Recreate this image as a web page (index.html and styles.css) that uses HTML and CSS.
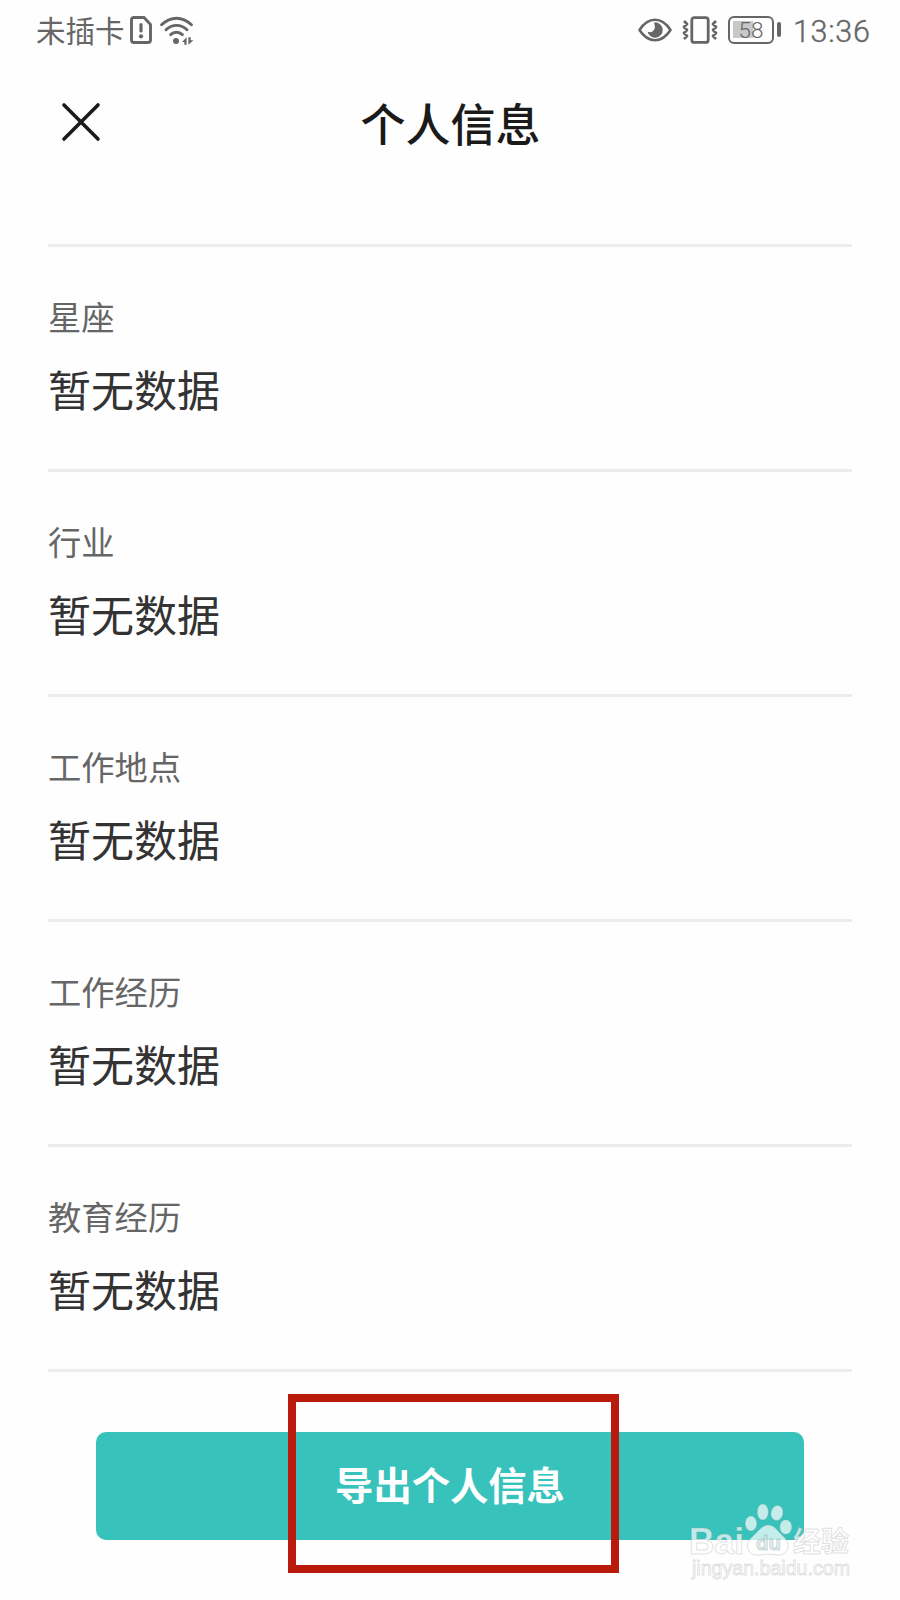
FILE: index.html
```
<!DOCTYPE html>
<html lang="zh-CN">
  <head>
    <title>个人信息</title>
    <meta charset="utf-8" />
    <meta name="viewport" content="width=device-width, initial-scale=1.0" />

    <link rel="stylesheet" href="styles.css">
  </head>
  <body>
    <div class="status-bar">
      <span class="carrier">未插卡</span>
      <svg class="sim" width="22" height="28" viewBox="0 0 22 28">
        <path d="M4 1.5H14L20.5 8.5V24Q20.5 26.5 18 26.5H4Q1.5 26.5 1.5 24V4Q1.5 1.5 4 1.5Z" fill="none" stroke="#666" stroke-width="2.9" />
        <path d="M11 8.5V15" stroke="#666" stroke-width="3.2" stroke-linecap="round" />
        <circle cx="11" cy="20.3" r="2.1" fill="#666" />
      </svg>
      <svg class="wifi" width="34" height="29" viewBox="0 0 34 29">
        <g fill="none" stroke="#666" stroke-width="2.9" stroke-linecap="round">
          <path d="M1.6 8.8Q8.5 2.2 16.5 2.2T31.4 8.8" />
          <path d="M6 13.8Q10.5 9.4 16.5 9.4T27 13.8" />
          <path d="M10.6 18.6Q13 16.3 16.5 16.3T22.4 18.6" />
        </g>
        <circle cx="16" cy="25" r="3" fill="#666" />
        <path d="M22 26L26.6 21.3V28.7H24.3V26ZM33.4 24.2L28.4 28.7V21.3H30.7V24.2Z" fill="#666" />
      </svg>
      <div class="status-right">
        <svg class="eye" width="34" height="24" viewBox="0 0 34 24">
          <path d="M1.5 12Q8 1.8 17 1.8T32.5 12Q26 22.2 17 22.2T1.5 12Z" fill="none" stroke="#666" stroke-width="2.6" stroke-linejoin="round" />
          <path d="M17.5 4.3A7.7 7.7 0 1 1 9.5 13.5Q12 15 14.8 13.2Q18.3 10.5 16 4.8Z" fill="#666" />
        </svg>
        <svg class="vibrate" width="36" height="28" viewBox="0 0 36 28">
          <g fill="none" stroke="#666">
            <rect x="9.8" y="1.6" width="16.4" height="24.8" rx="2.5" stroke-width="2.8" />
            <path d="M2 5L5 8L2 11L5 14L2 17L5 20L2 23M34 5L31 8L34 11L31 14L34 17L31 20L34 23" stroke-width="2.8" stroke-linejoin="round" />
          </g>
        </svg>
        <div class="battery"><span>58</span></div>
        <span class="time">13:36</span>
      </div>
    </div>

    <header>
      <svg class="close" width="40" height="40" viewBox="0 0 40 40">
        <path d="M3 3L37 37M37 3L3 37" stroke="#1a1a1a" stroke-width="3.6" stroke-linecap="round" />
      </svg>
      <h1>个人信息</h1>
    </header>

    <main>
      <section>
        <h2>星座</h2>
        <p>暂无数据</p>
      </section>
      <section>
        <h2>行业</h2>
        <p>暂无数据</p>
      </section>
      <section>
        <h2>工作地点</h2>
        <p>暂无数据</p>
      </section>
      <section>
        <h2>工作经历</h2>
        <p>暂无数据</p>
      </section>
      <section>
        <h2>教育经历</h2>
        <p>暂无数据</p>
      </section>
    </main>

    <button type="button">导出个人信息</button>

    <div class="highlight"></div>

    <div class="watermark">
      <svg width="168" height="90" viewBox="0 0 168 90">
        <g class="mark">
          <ellipse cx="64" cy="27.5" rx="5.8" ry="7.6" />
          <ellipse cx="75.8" cy="16" rx="5.6" ry="8" />
          <ellipse cx="90" cy="17" rx="6" ry="7.6" transform="rotate(12 90 17)" />
          <ellipse cx="98.8" cy="31" rx="6" ry="7.3" />
          <path d="M81 29Q87 29 91 35L98 42Q102 47 101 52Q98 60 90 59Q81 57 73 59Q63 60 61 53Q59 47 64 42L71 35Q76 29 81 29Z" />
          <text class="baidu" x="2" y="58" textLength="55" lengthAdjust="spacingAndGlyphs">Bai</text>
          <text class="cn" x="106" y="56" textLength="56" lengthAdjust="spacingAndGlyphs">经验</text>
          <text class="site" x="5" y="79" textLength="158" lengthAdjust="spacingAndGlyphs">jingyan.baidu.com</text>
        </g>
        <text class="du" x="69" y="54" textLength="25" lengthAdjust="spacingAndGlyphs">du</text>
      </svg>
    </div>
  </body>
</html>
```
FILE: styles.css
```
body {
  position: relative;
  height: 1600px;
  margin: 0;
  overflow: hidden;
  background-color: #fefefe;
  font-family: 'Noto Sans CJK SC', sans-serif;
}

.status-bar {
  display: flex;
  align-items: center;
  height: 60px;
  padding: 0 31px 0 36px;
  color: #666;
}

.carrier {
  width: 90px;
  padding-bottom: 2px;
  font-size: 29.5px;
  line-height: 58px;
}

.sim {
  margin-left: 4px;
}

.wifi {
  margin-left: 8px;
}

.status-right {
  display: flex;
  align-items: center;
  margin-left: auto;
}

.vibrate {
  margin-left: 10px;
}

.battery {
  position: relative;
  box-sizing: border-box;
  width: 46px;
  height: 28px;
  margin-left: 10px;
  border: 2.5px solid #666;
  border-radius: 6px;
  background: linear-gradient(#c8c8c8, #c8c8c8) 3px 3px / 20px 17px no-repeat;
  font-family: Roboto, sans-serif;
  font-size: 22.5px;
  font-weight: 300;
  line-height: 25px;
  text-align: center;
}

.battery::after {
  content: '';
  position: absolute;
  top: 4px;
  right: -9px;
  width: 4px;
  height: 15px;
  border-radius: 2px;
  background-color: #666;
}

.time {
  width: 76px;
  margin-left: 19px;
  padding-top: 4px;
  font-family: Roboto, sans-serif;
  font-size: 30.5px;
  font-weight: 300;
  letter-spacing: 0.7px;
  line-height: 56px;
  white-space: nowrap;
  -webkit-text-stroke: 0.4px #666;
}

header {
  position: relative;
  display: flex;
  align-items: center;
  justify-content: center;
  height: 126px;
  margin-bottom: 58px;
}

.close {
  position: absolute;
  left: 61px;
  top: 42px;
}

h1 {
  margin: 0 0 0 1px;
  color: #1a1a1a;
  font-size: 45px;
  font-weight: 500;
  line-height: 60px;
}

main {
  margin: 0 48px;
  border-top: 3px solid #ececec;
}

section {
  box-sizing: border-box;
  height: 225px;
  padding-top: 45px;
  border-bottom: 3px solid #ececec;
}

h2 {
  margin: 0;
  color: #666;
  font-size: 33.3px;
  font-weight: 400;
  line-height: 48px;
}

p {
  margin: 16px 0 0;
  color: #333;
  font-size: 43px;
  line-height: 64px;
}

button {
  display: block;
  width: 708px;
  height: 108px;
  margin: 60px auto 0;
  padding: 0 0 6px;
  border: 0;
  border-radius: 10px;
  background-color: #38c2bc;
  color: #fff;
  font-family: inherit;
  font-size: 38.3px;
  font-weight: 700;
}

.highlight {
  position: absolute;
  left: 288px;
  top: 1394px;
  box-sizing: border-box;
  width: 331px;
  height: 179px;
  border: 8px solid #b91a0b;
}

.watermark {
  position: absolute;
  left: 687px;
  top: 1496px;
}

.watermark svg {
  display: block;
  overflow: visible;
}

.mark {
  fill: rgba(255, 255, 255, 0.7);
  stroke: rgba(150, 150, 150, 0.3);
  stroke-width: 1px;
}

.baidu,
.du {
  font-family: 'Liberation Sans', sans-serif;
  font-weight: 700;
}

.baidu {
  font-size: 37px;
}

.cn {
  font-size: 28px;
  font-weight: 700;
}

.site {
  font-family: 'Liberation Sans', sans-serif;
  font-size: 20px;
}

.du {
  fill: rgba(200, 225, 223, 0.5);
  stroke: rgba(140, 160, 160, 0.4);
  font-size: 20px;
}
```
